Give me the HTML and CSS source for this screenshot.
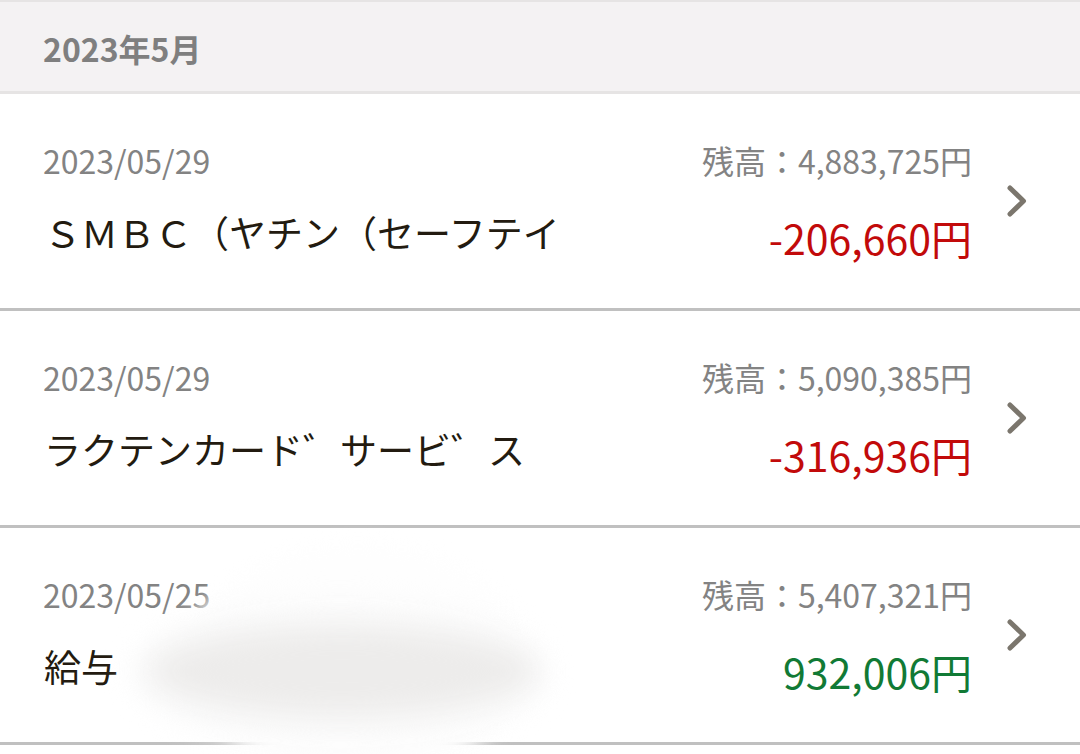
FILE: index.html
```html
<!DOCTYPE html>
<html lang="ja">
<head>
<meta charset="utf-8">
<title>入出金明細</title>
<link rel="stylesheet" href="styles.css">
</head>
<body>
<div class="month">2023年5月</div>
<ul class="list">
  <li class="item">
    <div class="info">
      <div class="top"><span class="date">2023/05/29</span><span class="balance">残高：4,883,725円</span></div>
      <div class="bottom"><span class="name">ＳＭＢＣ（ヤチン（セーフテイ</span><span class="amount minus">-206,660円</span></div>
    </div>
    <svg class="chev" viewBox="0 0 20 32" width="20" height="32"><polyline points="3,3 16.5,16 3,29"/></svg>
  </li>
  <li class="item">
    <div class="info">
      <div class="top"><span class="date">2023/05/29</span><span class="balance">残高：5,090,385円</span></div>
      <div class="bottom"><span class="name">ラクテンカード゛サービ゛ス</span><span class="amount minus">-316,936円</span></div>
    </div>
    <svg class="chev" viewBox="0 0 20 32" width="20" height="32"><polyline points="3,3 16.5,16 3,29"/></svg>
  </li>
  <li class="item">
    <div class="info">
      <div class="top"><span class="date">2023/05/25</span><span class="balance">残高：5,407,321円</span></div>
      <div class="bottom"><span class="name">給与</span><span class="amount plus">932,006円</span></div>
    </div>
    <svg class="chev" viewBox="0 0 20 32" width="20" height="32"><polyline points="3,3 16.5,16 3,29"/></svg>
    <div class="smudge" aria-hidden="true">
      <span class="blob white"></span>
      <span class="blob haze"></span>
      <span class="blob grey"></span>
    </div>
  </li>
</ul>
</body>
</html>
```
FILE: styles.css
```css
html, body {
  margin: 0;
  padding: 0;
  background: #ffffff;
}
body {
  width: 1080px;
  height: 754px;
  overflow: hidden;
  font-family: "Noto Sans CJK JP", "Noto Sans", sans-serif;
}
.month {
  box-sizing: border-box;
  height: 94px;
  border-top: 2px solid #e6e4e4;
  border-bottom: 3px solid #e6e4e4;
  background: #f4f2f3;
  padding-left: 43px;
  padding-top: 3px;
  display: flex;
  align-items: center;
  font-size: 32px;
  font-weight: 700;
  color: #7f7f7f;
  line-height: 1;
}
.list {
  list-style: none;
  margin: 0;
  padding: 0;
}
.item {
  position: relative;
  box-sizing: border-box;
  height: 217px;
  border-bottom: 3px solid #c0c0c0;
  display: flex;
  align-items: center;
  padding-left: 43px;
  padding-right: 53px;
}
.info {
  flex: 1;
  align-self: stretch;
  padding-top: 50px;
  margin-right: 35px;
}
.top, .bottom {
  display: flex;
  justify-content: space-between;
  align-items: flex-start;
  line-height: 1;
}
.date,
.balance {
  font-size: 32px;
  color: #838383;
}
.bottom {
  margin-top: 38px;
}
.name {
  font-size: 37px;
  color: #231b10;
  margin-left: 1px;
}
.amount {
  font-size: 41px;
  margin-top: 3px;
}
.minus { color: #c20a0a; }
.plus { color: #117a35; }
.chev {
  flex: none;
  fill: none;
  stroke: #7b766d;
  stroke-width: 5;
  stroke-linecap: round;
  stroke-linejoin: round;
}
.smudge {
  position: absolute;
  left: 0;
  top: 0;
  width: 100%;
  height: 240px;
  pointer-events: none;
}
.blob {
  position: absolute;
  border-radius: 50%;
}
.blob.white {
  left: 188px;
  top: 16px;
  width: 340px;
  height: 232px;
  background: #fefefe;
  filter: blur(9px);
}
.blob.haze {
  left: 130px;
  top: 70px;
  width: 420px;
  height: 150px;
  background: #fbfbfb;
  filter: blur(12px);
}
.blob.grey {
  left: 150px;
  top: 98px;
  width: 385px;
  height: 90px;
  background: #edeceb;
  filter: blur(14px);
}
```
